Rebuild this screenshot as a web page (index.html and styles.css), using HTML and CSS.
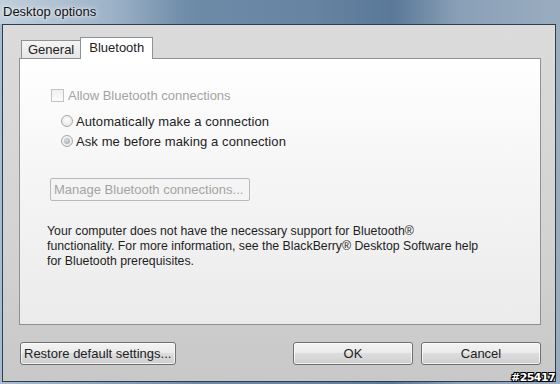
FILE: index.html
```html
<!DOCTYPE html>
<html>
<head>
<meta charset="utf-8">
<link rel="stylesheet" href="styles.css">
</head>
<body>
<div class="window">
  <div class="titlebar"><span class="title">Desktop options</span></div>
  <div class="client">
    <div class="tabs">
      <div class="tab">General</div>
      <div class="tab active">Bluetooth</div>
    </div>
    <div class="panel">
      <div class="row check-row">
        <span class="checkbox"></span>
        <span class="disabled">Allow Bluetooth connections</span>
      </div>
      <div class="radios">
        <div class="row radio-row"><span class="radio"></span><span>Automatically make a connection</span></div>
        <div class="row radio-row"><span class="radio checked"></span><span>Ask me before making a connection</span></div>
      </div>
      <div class="manage">Manage Bluetooth connections...</div>
      <p class="note">Your computer does not have the necessary support for Bluetooth®<br>functionality. For more information, see the BlackBerry® Desktop Software help<br>for Bluetooth prerequisites.</p>
    </div>
    <div class="buttons">
      <div class="btn restore">Restore default settings...</div>
      <div class="spacer"></div>
      <div class="btn wide">OK</div>
      <div class="btn wide">Cancel</div>
    </div>
  </div>
  <div class="watermark">#25417</div>
</div>
</body>
</html>
```
FILE: styles.css
```css
html, body {
  margin: 0;
  padding: 0;
}
body {
  width: 560px;
  height: 384px;
  overflow: hidden;
  font-family: "Liberation Sans", Arial, sans-serif;
  font-size: 13px;
  color: #222;
}
.window {
  position: relative;
  width: 560px;
  height: 384px;
  background: linear-gradient(90deg, #a9bccd 0%, #8ea6bd 15%, #6d8aa7 35%, #6785a3 55%, #5a7897 70%, #8aa0b7 82%, #9aadc0 100%);
  display: flex;
  flex-direction: column;
}
.titlebar {
  height: 24px;
  display: flex;
  align-items: center;
  padding-left: 3px;
  background: linear-gradient(90deg, rgba(210,222,232,0.55) 0px, rgba(200,214,228,0.35) 110px, rgba(255,255,255,0) 180px);
}
.title {
  color: #111;
  font-size: 13px;
  margin-top: -2px;
  text-shadow: 0 0 6px rgba(255,255,255,0.9), 0 0 3px rgba(255,255,255,0.8);
}
.client {
  margin-left: 2px;
  width: 552px;
  height: 356px;
  border: 1px solid #2f3d4c;
  background: linear-gradient(180deg, #dbdbdb 0%, #d3d3d3 60%, #c8c8c8 100%);
  display: flex;
  flex-direction: column;
}
.tabs {
  margin-top: 12px;
  margin-left: 18px;
  height: 21px;
  display: flex;
  align-items: flex-end;
}
.tab {
  height: 18px;
  box-sizing: border-box;
  border: 1px solid #8e9197;
  border-bottom: none;
  padding: 0 6px;
  line-height: 18px;
  background: linear-gradient(180deg, #f4f4f4, #e6e6e6);
  color: #222;
}
.tab.active {
  height: 22px;
  margin-bottom: -1px;
  margin-left: -1px;
  position: relative;
  z-index: 2;
  background: #fff;
  line-height: 20px;
  padding: 0 8px 0 8px;
}
.panel {
  margin-left: 16px;
  width: 522px;
  height: 267px;
  box-sizing: border-box;
  border: 1px solid #8e9197;
  background: linear-gradient(180deg, #ffffff 0%, #f6f6f6 40%, #ebebeb 100%);
  padding: 28px 0 0 27px;
  position: relative;
  z-index: 1;
}
.row {
  display: flex;
  align-items: center;
}
.check-row {
  height: 16px;
  margin-left: 4px;
  gap: 4px;
}
.checkbox {
  width: 11px;
  height: 11px;
  border: 1px solid #c2c2c2;
  background: linear-gradient(180deg, #f0f0f0, #fbfbfb);
}
.disabled {
  color: #a3a3a3;
}
.radios {
  margin-top: 8px;
  margin-left: 14px;
}
.radio-row {
  height: 20px;
  gap: 3px;
}
.radio {
  width: 10px;
  height: 10px;
  border: 1px solid #a9a9a9;
  border-radius: 50%;
  background: radial-gradient(circle at 50% 40%, #fdfdfd, #e2e2e2);
  display: flex;
  align-items: center;
  justify-content: center;
}
.radio.checked::after {
  content: "";
  width: 6px;
  height: 6px;
  border-radius: 50%;
  background: radial-gradient(circle at 40% 35%, #d4dbe2, #9aa5b0);
}
.radio-row span:last-child {
  letter-spacing: 0.1px;
}
.manage {
  margin-top: 27px;
  margin-left: 3px;
  width: 200px;
  height: 23px;
  box-sizing: border-box;
  border: 1px solid #b6b9bd;
  border-radius: 2px;
  background: #f4f4f4;
  color: #a3a3a3;
  line-height: 21px;
  padding-left: 3px;
  white-space: nowrap;
}
.note {
  margin: 23px 0 0 0;
  font-size: 12.3px;
  line-height: 15px;
  color: #1e1e1e;
  white-space: nowrap;
}
.buttons {
  margin-top: 17px;
  margin-left: 17px;
  margin-right: 14px;
  display: flex;
  gap: 8px;
}
.spacer {
  flex: 1;
}
.btn {
  height: 23px;
  box-sizing: border-box;
  border: 1px solid #707070;
  border-radius: 3px;
  background: linear-gradient(180deg, #f3f3f3 0%, #ebebeb 45%, #dddddd 50%, #cfcfcf 100%);
  box-shadow: inset 0 0 0 1px rgba(255,255,255,0.7);
  line-height: 21px;
  color: #222;
  text-align: center;
  white-space: nowrap;
}
.btn.restore {
  width: 156px;
  text-align: left;
  padding-left: 3px;
}
.btn.wide {
  width: 120px;
}
.watermark {
  position: absolute;
  right: 5px;
  bottom: 0px;
  font-family: "DejaVu Sans", sans-serif;
  font-weight: bold;
  font-size: 11px;
  line-height: 13px;
  color: #fff;
  letter-spacing: -0.6px;
  text-shadow: 1px 0 0 #000, -1px 0 0 #000, 0 1px 0 #000, 0 -1px 0 #000, 1px 1px 0 #000, -1px -1px 0 #000, 1px -1px 0 #000, -1px 1px 0 #000;
}
```
